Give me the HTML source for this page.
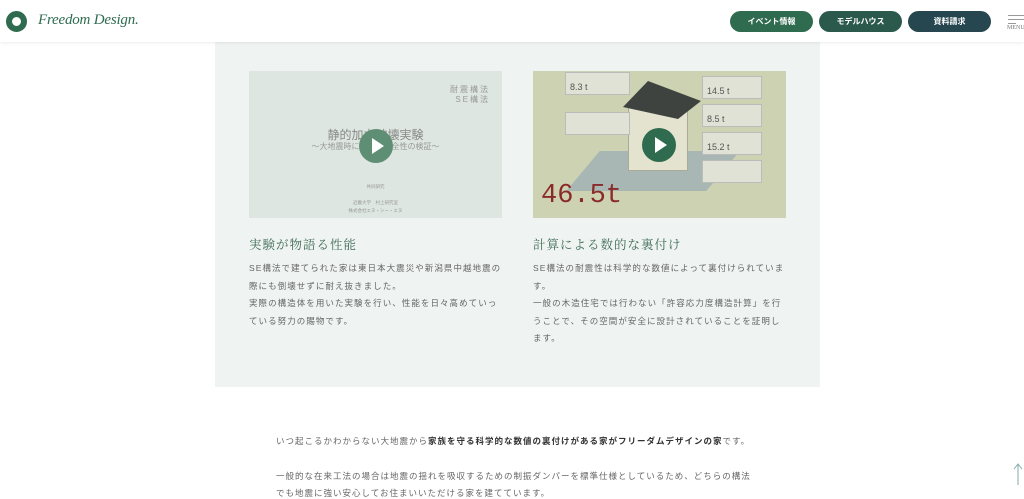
<!DOCTYPE html>
<html><head><meta charset="utf-8"><style>
*{margin:0;padding:0;box-sizing:border-box}
body{width:1024px;height:495px;overflow:hidden;background:#fff;font-family:"Liberation Sans","Noto Sans CJK JP",sans-serif;position:relative;color:#555}
.hdr{position:absolute;left:0;top:0;width:1024px;height:42px;background:#fff;box-shadow:0 1px 3px rgba(0,0,0,.08);z-index:5}
.logo{position:absolute;left:6px;top:11px;width:21px;height:21px;border-radius:50%;border:6px solid #2f6b4f;background:#fff}
.lt{position:absolute;left:38px;top:12px;font-family:"Liberation Serif",serif;font-style:italic;font-size:15px;color:#2f6b4f;letter-spacing:-.2px}
.btn{position:absolute;top:11px;height:21px;width:83px;border-radius:11px;color:#fff;font-size:8px;text-align:center;line-height:21px;font-weight:bold}
.panel{position:absolute;left:215px;top:42px;width:605px;height:345px;background:#eff3f2}
.h{position:absolute;font-size:12.5px;color:#3d6b55;letter-spacing:1px;font-family:"Liberation Serif","Noto Serif CJK SC",serif}
.p{position:absolute;font-size:8.5px;line-height:17.5px;letter-spacing:1.05px;color:#666}
.play{position:absolute;width:34px;height:34px;border-radius:50%}
.play:after{content:"";position:absolute;left:13px;top:9px;border-left:12px solid #fff;border-top:8px solid transparent;border-bottom:8px solid transparent}
.b{position:absolute;left:276px;font-size:8.5px;letter-spacing:1.0px;color:#666;white-space:nowrap}
</style></head><body>
<div class="hdr">
<div class="logo"></div><div class="lt">Freedom Design.</div>
<div class="btn" style="left:730px;background:#2f6b4f">イベント情報</div>
<div class="btn" style="left:819px;background:#2b5a4d">モデルハウス</div>
<div class="btn" style="left:908px;background:#264650">資料請求</div>
<div style="position:absolute;left:1008px;top:15px;width:16px;height:1px;background:#999"></div>
<div style="position:absolute;left:1008px;top:19px;width:16px;height:1px;background:#999"></div>
<div style="position:absolute;left:1008px;top:23px;width:8px;height:1px;background:#999"></div>
<div style="position:absolute;left:1007px;top:25px;font-size:6px;color:#777;font-family:'Liberation Serif',serif">MENU</div>
</div>
<div class="panel"></div>
<div style="position:absolute;left:249px;top:71px;width:253px;height:147px;background:#dde6e0">
<div style="position:absolute;right:12px;top:14px;font-size:8px;color:#999;letter-spacing:2px;line-height:10px;text-align:right">耐震構法<br>SE構法</div>
<div style="position:absolute;left:0;width:253px;top:55px;text-align:center;font-size:12px;color:#888">静的加力破壊実験</div>
<div style="position:absolute;left:0;width:253px;top:70px;text-align:center;font-size:8px;color:#999">～大地震時における安全性の検証～</div>
<div style="position:absolute;left:0;width:253px;top:112px;text-align:center;font-size:4.5px;color:#999;line-height:8px">共同研究<br><br>近畿大学　村上研究室<br>株式会社エヌ・シー・エヌ</div>
</div>
<div class="play" style="left:359px;top:129px;background:#5e8f75"></div>
<div style="position:absolute;left:533px;top:71px;width:253px;height:147px;background:#ccd2b2;overflow:hidden">
<div style="position:absolute;left:50px;top:80px;width:140px;height:40px;background:#a9b7b4;transform:skewX(-40deg)"></div>
<div style="position:absolute;left:95px;top:30px;width:60px;height:70px;background:#e3e3cf;border:1px solid #aa9"></div>
<svg style="position:absolute;left:90px;top:8px" width="80" height="40"><polygon points="0,28 25,2 78,22 55,40" fill="#3f433f"/></svg>
<div style="position:absolute;left:32px;top:1px;width:65px;height:23px;background:#dfe2d5;border:1px solid #bbb;font-size:9px;color:#555;padding:9px 0 0 4px">8.3 t</div>
<div style="position:absolute;left:32px;top:41px;width:65px;height:23px;background:#dfe2d5;border:1px solid #bbb"></div>
<div style="position:absolute;left:169px;top:5px;width:60px;height:23px;background:#dfe2d5;border:1px solid #bbb;font-size:9px;color:#555;padding:9px 0 0 4px">14.5 t</div>
<div style="position:absolute;left:169px;top:33px;width:60px;height:23px;background:#dfe2d5;border:1px solid #bbb;font-size:9px;color:#555;padding:9px 0 0 4px">8.5 t</div>
<div style="position:absolute;left:169px;top:61px;width:60px;height:23px;background:#dfe2d5;border:1px solid #bbb;font-size:9px;color:#555;padding:9px 0 0 4px">15.2 t</div>
<div style="position:absolute;left:169px;top:89px;width:60px;height:23px;background:#dfe2d5;border:1px solid #bbb"></div>
<div style="position:absolute;left:8px;top:110px;font-family:'Liberation Mono',monospace;font-size:27px;color:#8b2a2a">46.5t</div>
</div>
<div class="play" style="left:642px;top:128px;background:#2e6b4f"></div>
<div class="h" style="left:249px;top:235px">実験が物語る性能</div>
<div class="h" style="left:533px;top:235px">計算による数的な裏付け</div>
<div class="p" style="left:249px;top:260px;width:256px">SE構法で建てられた家は東日本大震災や新潟県中越地震の際にも倒壊せずに耐え抜きました。<br>実際の構造体を用いた実験を行い、性能を日々高めていっている努力の賜物です。</div>
<div class="p" style="left:533px;top:260px;width:253px">SE構法の耐震性は科学的な数値によって裏付けられています。<br>一般の木造住宅では行わない「許容応力度構造計算」を行うことで、その空間が安全に設計されていることを証明します。</div>
<div class="b" style="top:435px">いつ起こるかわからない大地震から<b style="color:#333">家族を守る科学的な数値の裏付けがある家がフリーダムデザインの家</b>です。</div>
<div class="b" style="top:470px">一般的な在来工法の場合は地震の揺れを吸収するための制振ダンパーを標準仕様としているため、どちらの構法</div>
<div class="b" style="top:487px">でも地震に強い安心してお住まいいただける家を建てています。</div>
<svg style="position:absolute;left:1012px;top:462px" width="12" height="24"><path d="M6 2V23M2 7L6 2L10 7" stroke="#8aa" fill="none" stroke-width="1"/></svg>
</body></html>
